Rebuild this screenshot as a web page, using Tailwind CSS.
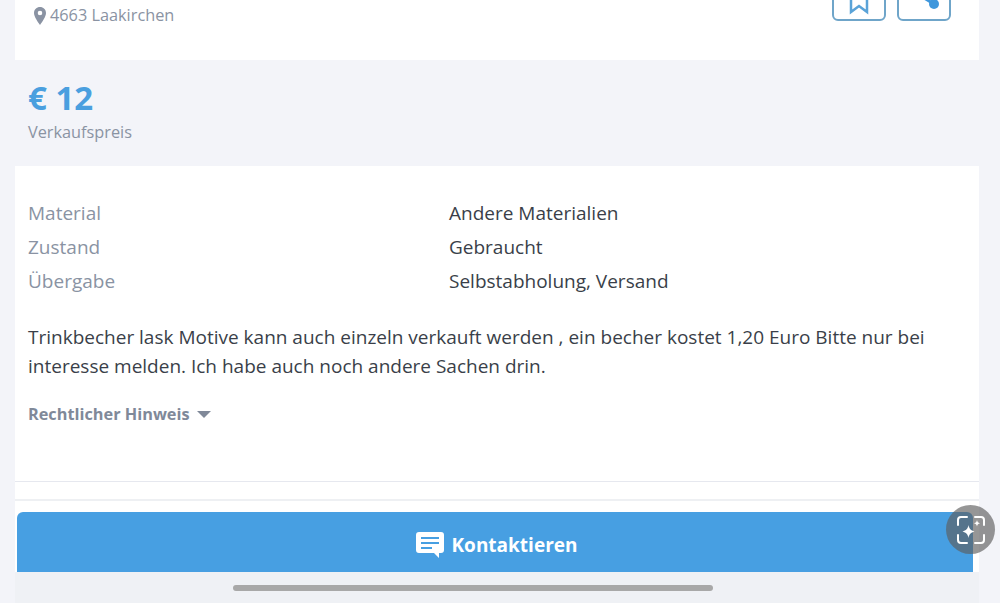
<!DOCTYPE html>
<html lang="de">
<head>
<meta charset="UTF-8">
<title>Trinkbecher</title>
<script src="https://cdn.jsdelivr.net/npm/@tailwindcss/browser@4"></script>
</head>
<body class="bg-[#f3f4f9] h-[603px] overflow-hidden relative font-['Open_Sans',sans-serif] text-[#3a3f49]">
  <div class="ml-[15px] w-[964px]">
    <!-- location + actions -->
    <div class="bg-white h-[60px] flex justify-between items-start pl-[19px] pr-[28px]">
      <div class="flex items-center gap-[4px] h-[31px] text-[#8a93a3] text-[16.3px]">
        <svg class="w-[12px] h-[18px]" viewBox="0 0 12 18"><path fill="#8a93a3" fill-rule="evenodd" d="M6 0C2.700 0 0 2.600 0 5.900 0 9.600 4 15 6 18c2-3 6-8.400 6-12.100C12 2.600 9.300 0 6 0zm0 3.700a2.300 2.300 0 1 1 0 4.600 2.300 2.300 0 0 1 0-4.600z"/></svg>
        <span>4663 Laakirchen</span>
      </div>
      <div class="flex gap-[11px] -mt-[30px]">
        <div class="w-[54px] h-[51px] border-2 border-[#6fa5c9] rounded-[6px] flex items-end justify-center pb-[4px]">
          <svg class="w-[20px] h-[24px]" viewBox="0 0 20 24"><path fill="none" stroke="#5aa3d8" stroke-width="2.500" d="M2 0v21l8-6 8 6V0z"/></svg>
        </div>
        <div class="w-[54px] h-[51px] border-2 border-[#6fa5c9] rounded-[6px] relative">
          <svg class="absolute left-[21px] top-[22px] w-[22px] h-[20px]" viewBox="0 0 22 20"><path stroke="#3f97dc" stroke-width="3" d="M0 1.500L14 10"/><circle cx="14" cy="10" r="5" fill="#3f97dc"/></svg>
        </div>
      </div>
    </div>

    <!-- price -->
    <div class="h-[106px] pl-[13px] pt-[16px]">
      <div class="text-[#4a9fdf] text-[33px] font-bold leading-[44px]">€ 12</div>
      <div class="text-[#8a93a3] text-[16.3px] leading-[22px] mt-[1px]">Verkaufspreis</div>
    </div>

    <!-- details -->
    <div class="bg-white h-[316px] pl-[13px] pr-[40px] pt-[30px] border-b border-[#e6e8ef]">
      <dl class="grid grid-cols-[421px_1fr] text-[19px] leading-[34px]">
        <dt class="text-[#8a93a3]">Material</dt><dd>Andere Materialien</dd>
        <dt class="text-[#8a93a3]">Zustand</dt><dd>Gebraucht</dd>
        <dt class="text-[#8a93a3]">Übergabe</dt><dd>Selbstabholung, Versand</dd>
      </dl>
      <p class="text-[19px] leading-[29px] mt-[25px]">Trinkbecher lask Motive kann auch einzeln verkauft werden , ein becher kostet 1,20 Euro Bitte nur bei interesse melden. Ich habe auch noch andere Sachen drin.</p>
      <div class="flex items-center gap-[7px] mt-[22px] text-[#808999] text-[16.3px] font-bold leading-[22px]">
        <span>Rechtlicher Hinweis</span>
        <span class="w-0 h-0 border-x-[7px] border-x-transparent border-t-[7px] border-t-[#808999]"></span>
      </div>
    </div>
    <div class="bg-white h-[17px]"></div>
    <div class="bg-[#eef0f3] h-[2px]"></div>

    <!-- contact button -->
    <div class="bg-white h-[71px] pt-[11px] pl-[2px] pr-[6px]">
      <div class="h-[60px] bg-[#479fe2] rounded-t-[6px] flex items-center justify-center gap-[8px] pl-[3px] pt-[6px] text-white text-[19px] font-bold">
        <svg class="w-[28px] h-[26px]" viewBox="0 0 28 26"><path fill="#fff" fill-rule="evenodd" d="M3 0h22a3 3 0 0 1 3 3v15a3 3 0 0 1-3 3h-2v5l-5-5H3a3 3 0 0 1-3-3V3a3 3 0 0 1 3-3zm2 5v2h18V5zm0 5v2h18v-2zm0 5v2h11v-2z"/></svg>
        <span>Kontaktieren</span>
      </div>
    </div>
    <div class="bg-[#eff1f5] h-[31px]"></div>
  </div>

  <!-- home indicator -->
  <div class="absolute left-[233px] top-[585px] w-[480px] h-[6px] rounded-full bg-[#a8a8a8]"></div>

  <!-- lens button -->
  <div class="absolute left-[946px] top-[505px] w-[49px] h-[49px] rounded-full bg-[#5e5e5e]/65 flex items-center justify-center">
    <svg class="w-[30px] h-[30px]" viewBox="0 0 30 30" fill="none"><path stroke="#fff" stroke-width="2" stroke-linecap="round" d="M2 10V5a3 3 0 0 1 3-3h6M19 2h6a3 3 0 0 1 3 3v5M2 20v5a3 3 0 0 0 3 3h6M28 20v5a3 3 0 0 1-3 3h-6"/><path fill="#fff" d="M12.500 10c.8 4 2.200 5.400 6 6.500-3.800 1.100-5.200 2.500-6 6.500-.8-4-2.200-5.400-6-6.500 3.800-1.100 5.200-2.500 6-6.500zM21 5c.4 2 1.100 2.700 3 3.200-1.900.5-2.600 1.200-3 3.200-.4-2-1.100-2.700-3-3.200 1.900-.5 2.600-1.200 3-3.200z"/></svg>
  </div>
</body>
</html>
